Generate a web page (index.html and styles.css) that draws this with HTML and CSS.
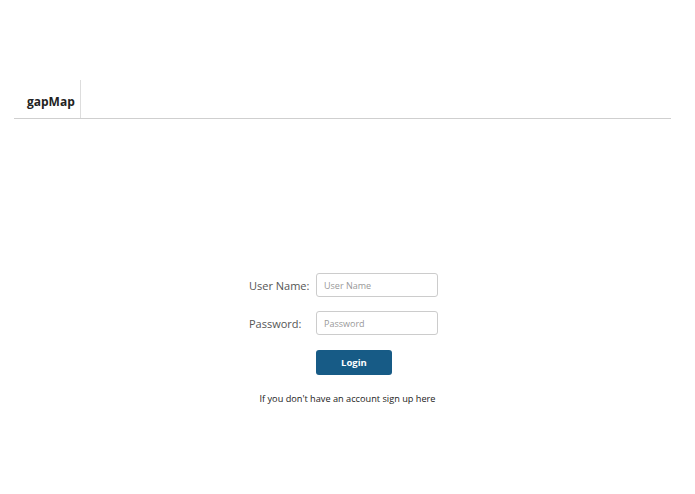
FILE: index.html
```html
<!DOCTYPE html>
<html lang="en">
<head>
    <meta charset="UTF-8">
    <meta name="viewport" content="width=device-width, initial-scale=1.0">
    <title>gapMap - Login</title>
    <link rel="stylesheet" href="styles.css">
</head>
<body>

    <div class="navbar">
        <div class="brand">gapMap</div>
    </div>

    <div class="login">
        <form class="login-form">
            <label for="userName">User Name:</label>
            <input type="text" id="userName" placeholder="User Name">

            <label for="password">Password:</label>
            <input type="password" id="password" placeholder="Password">

            <span></span>
            <button type="button" class="login-btn">Login</button>
        </form>

        <p class="signup">If you don't have an account sign up here</p>
    </div>

</body>
</html>
```

FILE: styles.css
```css
/* Basic layout for the login page */
body {
    font-family: "Open Sans", Arial, sans-serif;
    margin: 0;
    padding: 0;
    background-color: white;
    color: #333;
}
.navbar {
    margin: 80px 24px 0 14px;
    height: 38px;
    border-bottom: 1px solid #cfcfcf;
    display: flex;
}
.brand {
    width: 53px;
    padding-left: 13px;
    border-right: 1px solid #ddd;
    font-size: 12px;
    font-weight: bold;
    color: #222;
    display: flex;
    align-items: center;
    padding-top: 4px;
    box-sizing: content-box;
}
.login {
    margin-top: 154px;
    display: flex;
    flex-direction: column;
    align-items: center;
}
.login-form {
    display: grid;
    grid-template-columns: 67px 122px;
    row-gap: 14px;
    align-items: center;
    margin-left: -8px;
}
.login-form label {
    font-size: 11px;
    color: #555;
}
.login-form input {
    width: 122px;
    height: 24px;
    box-sizing: border-box;
    border: 1px solid #ccc;
    border-radius: 3px;
    padding: 0 7px;
    font-family: "Open Sans", Arial, sans-serif;
    font-size: 9px;
    color: #555;
}
.login-form input::placeholder {
    color: #999;
}
.login-btn {
    width: 76px;
    height: 25px;
    margin-top: 1px;
    background-color: #175b86;
    color: white;
    border: none;
    border-radius: 3px;
    font-family: "Open Sans", Arial, sans-serif;
    font-size: 9.5px;
    font-weight: bold;
    cursor: pointer;
}
.signup {
    margin: 17px 0 0;
    font-size: 9.2px;
    color: #222;
}
```
